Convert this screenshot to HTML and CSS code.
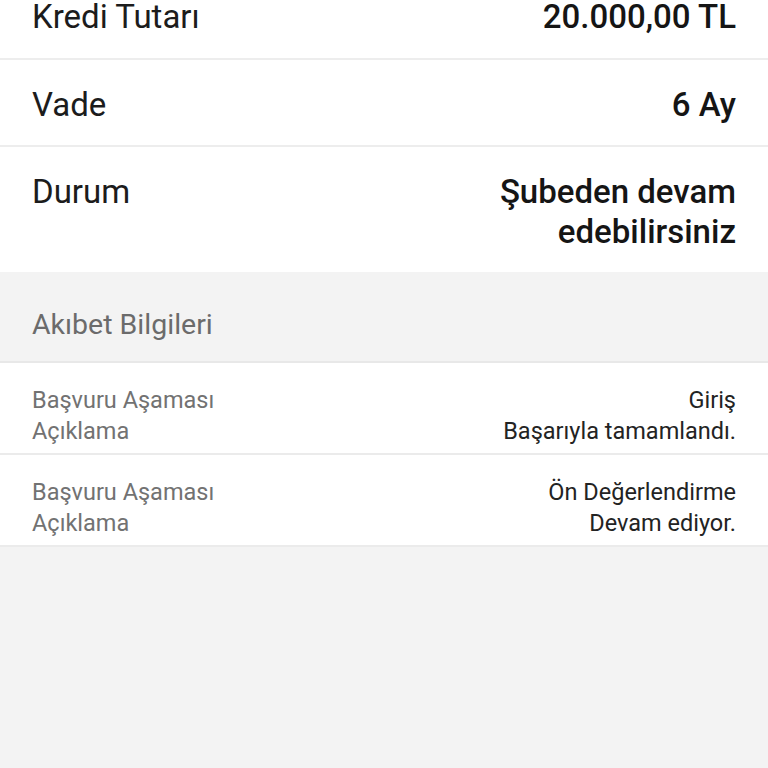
FILE: index.html
```html
<!DOCTYPE html>
<html lang="tr">
<head>
<meta charset="utf-8">
<title>Kredi Başvurusu</title>
<link rel="stylesheet" href="styles.css">
</head>
<body>
<div class="page">
  <section class="summary">
    <div class="row first">
      <div class="label">Kredi Tutarı</div>
      <div class="value">20.000,00 TL</div>
    </div>
    <div class="row">
      <div class="label">Vade</div>
      <div class="value">6 Ay</div>
    </div>
    <div class="row">
      <div class="label">Durum</div>
      <div class="value">Şubeden devam<br>edebilirsiniz</div>
    </div>
  </section>
  <section class="status">
    <div class="status-head">Akıbet Bilgileri</div>
    <div class="status-row">
      <div class="s-labels">
        <div>Başvuru Aşaması</div>
        <div>Açıklama</div>
      </div>
      <div class="s-values">
        <div>Giriş</div>
        <div>Başarıyla tamamlandı.</div>
      </div>
    </div>
    <div class="status-row">
      <div class="s-labels">
        <div>Başvuru Aşaması</div>
        <div>Açıklama</div>
      </div>
      <div class="s-values">
        <div>Ön Değerlendirme</div>
        <div>Devam ediyor.</div>
      </div>
    </div>
  </section>
</div>
</body>
</html>
```

FILE: styles.css
```css
html, body {
  margin: 0;
  padding: 0;
  background: #f3f3f3;
  font-family: Roboto, "Noto Sans", "Liberation Sans", sans-serif;
}

.page {
  width: 768px;
  height: 768px;
  overflow: hidden;
  background: #f3f3f3;
}

.summary {
  background: #ffffff;
}

.row {
  display: flex;
  justify-content: space-between;
  align-items: flex-start;
  padding: 25px 32px 20px;
  border-top: 2px solid #ededed;
  font-size: 33px;
  line-height: 40px;
}

.row.first {
  border-top: none;
  padding-top: 0;
  padding-bottom: 24px;
  line-height: 34px;
}

.label {
  color: #1c1c1c;
  font-weight: 400;
}

.value {
  color: #151515;
  font-weight: 500;
  text-align: right;
}

.status {
  background: #f3f3f3;
}

.status-head {
  padding: 35px 32px 18px;
  font-size: 28.5px;
  line-height: 36px;
  color: #6b6b6b;
  border-bottom: 2px solid #e8e8e8;
}

.status-row {
  display: flex;
  justify-content: space-between;
  background: #ffffff;
  padding: 22px 32px 6px;
  font-size: 23.5px;
  line-height: 31px;
  border-bottom: 2px solid #ebebeb;
}

.s-labels {
  color: #727272;
}

.s-values {
  color: #232323;
  text-align: right;
}
```
